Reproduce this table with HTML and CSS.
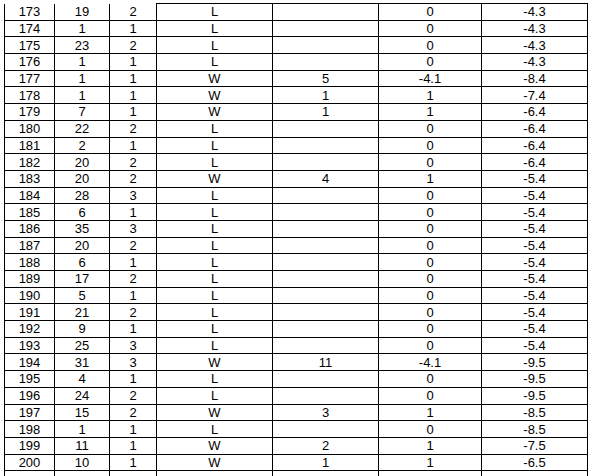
FILE: index.html
```html
<!DOCTYPE html>
<html>
<head>
<meta charset="utf-8">
<link rel="stylesheet" href="styles.css">
</head>
<body>
<table class="grid">
<colgroup>
<col class="c1"><col class="c2"><col class="c3"><col class="c4"><col class="c5"><col class="c6"><col class="c7">
</colgroup>
<tbody>
<tr class="first"><td>173</td><td>19</td><td>2</td><td>L</td><td></td><td>0</td><td>-4.3</td></tr>
<tr><td>174</td><td>1</td><td>1</td><td>L</td><td></td><td>0</td><td>-4.3</td></tr>
<tr><td>175</td><td>23</td><td>2</td><td>L</td><td></td><td>0</td><td>-4.3</td></tr>
<tr><td>176</td><td>1</td><td>1</td><td>L</td><td></td><td>0</td><td>-4.3</td></tr>
<tr><td>177</td><td>1</td><td>1</td><td>W</td><td>5</td><td>-4.1</td><td>-8.4</td></tr>
<tr><td>178</td><td>1</td><td>1</td><td>W</td><td>1</td><td>1</td><td>-7.4</td></tr>
<tr><td>179</td><td>7</td><td>1</td><td>W</td><td>1</td><td>1</td><td>-6.4</td></tr>
<tr><td>180</td><td>22</td><td>2</td><td>L</td><td></td><td>0</td><td>-6.4</td></tr>
<tr><td>181</td><td>2</td><td>1</td><td>L</td><td></td><td>0</td><td>-6.4</td></tr>
<tr><td>182</td><td>20</td><td>2</td><td>L</td><td></td><td>0</td><td>-6.4</td></tr>
<tr><td>183</td><td>20</td><td>2</td><td>W</td><td>4</td><td>1</td><td>-5.4</td></tr>
<tr><td>184</td><td>28</td><td>3</td><td>L</td><td></td><td>0</td><td>-5.4</td></tr>
<tr><td>185</td><td>6</td><td>1</td><td>L</td><td></td><td>0</td><td>-5.4</td></tr>
<tr><td>186</td><td>35</td><td>3</td><td>L</td><td></td><td>0</td><td>-5.4</td></tr>
<tr><td>187</td><td>20</td><td>2</td><td>L</td><td></td><td>0</td><td>-5.4</td></tr>
<tr><td>188</td><td>6</td><td>1</td><td>L</td><td></td><td>0</td><td>-5.4</td></tr>
<tr><td>189</td><td>17</td><td>2</td><td>L</td><td></td><td>0</td><td>-5.4</td></tr>
<tr><td>190</td><td>5</td><td>1</td><td>L</td><td></td><td>0</td><td>-5.4</td></tr>
<tr><td>191</td><td>21</td><td>2</td><td>L</td><td></td><td>0</td><td>-5.4</td></tr>
<tr><td>192</td><td>9</td><td>1</td><td>L</td><td></td><td>0</td><td>-5.4</td></tr>
<tr><td>193</td><td>25</td><td>3</td><td>L</td><td></td><td>0</td><td>-5.4</td></tr>
<tr><td>194</td><td>31</td><td>3</td><td>W</td><td>11</td><td>-4.1</td><td>-9.5</td></tr>
<tr><td>195</td><td>4</td><td>1</td><td>L</td><td></td><td>0</td><td>-9.5</td></tr>
<tr><td>196</td><td>24</td><td>2</td><td>L</td><td></td><td>0</td><td>-9.5</td></tr>
<tr><td>197</td><td>15</td><td>2</td><td>W</td><td>3</td><td>1</td><td>-8.5</td></tr>
<tr><td>198</td><td>1</td><td>1</td><td>L</td><td></td><td>0</td><td>-8.5</td></tr>
<tr><td>199</td><td>11</td><td>1</td><td>W</td><td>2</td><td>1</td><td>-7.5</td></tr>
<tr><td>200</td><td>10</td><td>1</td><td>W</td><td>1</td><td>1</td><td>-6.5</td></tr>
<tr><td></td><td></td><td></td><td></td><td></td><td></td><td></td></tr>
</tbody>
</table>
</body>
</html>
```
FILE: styles.css
```css
html, body {
  margin: 0;
  padding: 0;
  background: #fff;
}
body {
  padding: 3px 0 0 4px;
  font-family: "Liberation Sans", Arial, sans-serif;
  font-size: 13px;
  color: #000;
}
.grid {
  border-collapse: collapse;
  table-layout: fixed;
  width: 583px;
}
.c1 { width: 50px; }
.c2 { width: 55px; }
.c3 { width: 47px; }
.c4 { width: 116px; }
.c5 { width: 106px; }
.c6 { width: 103px; }
.c7 { width: 106px; }
.grid td {
  border: 1px solid #000;
  padding: 0;
  height: 16.7px;
  line-height: 15px;
  text-align: center;
  vertical-align: middle;
  box-sizing: border-box;
}
.grid .first td:nth-child(-n+3) {
  border-top: none;
}
```
